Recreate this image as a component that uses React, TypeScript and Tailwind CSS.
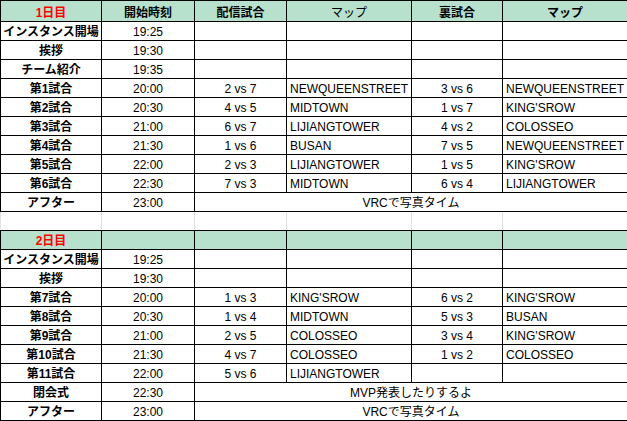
import React from "react";

type Row = {
  label: string;
  time: string;
  match?: string;
  map?: string;
  sub?: string;
  subMap?: string;
  merged?: string;
  blank?: "all" | "sub";
};

const day1: Row[] = [
  { label: "インスタンス開場", time: "19:25", blank: "all" },
  { label: "挨拶", time: "19:30", blank: "all" },
  { label: "チーム紹介", time: "19:35", blank: "all" },
  { label: "第1試合", time: "20:00", match: "2 vs 7", map: "NEWQUEENSTREET", sub: "3 vs 6", subMap: "NEWQUEENSTREET" },
  { label: "第2試合", time: "20:30", match: "4 vs 5", map: "MIDTOWN", sub: "1 vs 7", subMap: "KING'SROW" },
  { label: "第3試合", time: "21:00", match: "6 vs 7", map: "LIJIANGTOWER", sub: "4 vs 2", subMap: "COLOSSEO" },
  { label: "第4試合", time: "21:30", match: "1 vs 6", map: "BUSAN", sub: "7 vs 5", subMap: "NEWQUEENSTREET" },
  { label: "第5試合", time: "22:00", match: "2 vs 3", map: "LIJIANGTOWER", sub: "1 vs 5", subMap: "KING'SROW" },
  { label: "第6試合", time: "22:30", match: "7 vs 3", map: "MIDTOWN", sub: "6 vs 4", subMap: "LIJIANGTOWER" },
  { label: "アフター", time: "23:00", merged: "VRCで写真タイム" },
];

const day2: Row[] = [
  { label: "インスタンス開場", time: "19:25", blank: "all" },
  { label: "挨拶", time: "19:30", blank: "all" },
  { label: "第7試合", time: "20:00", match: "1 vs 3", map: "KING'SROW", sub: "6 vs 2", subMap: "KING'SROW" },
  { label: "第8試合", time: "20:30", match: "1 vs 4", map: "MIDTOWN", sub: "5 vs 3", subMap: "BUSAN" },
  { label: "第9試合", time: "21:00", match: "2 vs 5", map: "COLOSSEO", sub: "3 vs 4", subMap: "KING'SROW" },
  { label: "第10試合", time: "21:30", match: "4 vs 7", map: "COLOSSEO", sub: "1 vs 2", subMap: "COLOSSEO" },
  { label: "第11試合", time: "22:00", match: "5 vs 6", map: "LIJIANGTOWER", blank: "sub" },
  { label: "閉会式", time: "22:30", merged: "MVP発表したりするよ" },
  { label: "アフター", time: "23:00", merged: "VRCで写真タイム" },
];

const cell = "border border-black h-[19px] p-0 align-bottom leading-[15px] whitespace-nowrap overflow-hidden";

const DataRow: React.FC<{ row: Row }> = ({ row }) => (
  <tr>
    <td className={`${cell} text-center font-bold`}>{row.label}</td>
    <td className={`${cell} text-center`}>{row.time}</td>
    {row.merged ? (
      <td colSpan={4} className={`${cell} text-center`}>{row.merged}</td>
    ) : row.blank === "all" ? (
      <>
        <td className={cell}></td>
        <td className={cell}></td>
        <td className={cell}></td>
        <td className={cell}></td>
      </>
    ) : (
      <>
        <td className={`${cell} text-center`}>{row.match}</td>
        <td className={`${cell} pl-[3px]`}>{row.map}</td>
        <td className={`${cell} text-center`}>{row.sub}</td>
        <td className={`${cell} pl-[3px]`}>{row.subMap}</td>
      </>
    )}
  </tr>
);

const HeaderRow: React.FC<{ day: string; titles: boolean }> = ({ day, titles }) => (
  <tr className={titles ? "bg-[#b7e1cd] h-[21px]" : "bg-[#b7e1cd] h-[19px]"}>
    <td className={`${cell} text-center font-bold text-[#ff0000]`}>{day}</td>
    <td className={`${cell} text-center font-bold`}>{titles ? "開始時刻" : ""}</td>
    <td className={`${cell} text-center font-bold`}>{titles ? "配信試合" : ""}</td>
    <td className={`${cell} text-center`}>{titles ? "マップ" : ""}</td>
    <td className={`${cell} text-center font-bold`}>{titles ? "裏試合" : ""}</td>
    <td className={`${cell} text-center font-bold`}>{titles ? "マップ" : ""}</td>
  </tr>
);

const gap = "h-[19px] p-0 border-x border-x-[#e2e2e2] border-y border-y-black";

export default function App() {
  return (
    <div className="w-[627px] h-[421px] bg-white overflow-hidden text-[12px] text-black font-['Liberation_Sans','Noto_Sans_CJK_JP',sans-serif]">
      <table className="border-collapse table-fixed w-[627px]">
        <colgroup>
          <col className="w-[101px]" />
          <col className="w-[93px]" />
          <col className="w-[92px]" />
          <col className="w-[125px]" />
          <col className="w-[91px]" />
          <col className="w-[125px]" />
        </colgroup>
        <tbody>
          <HeaderRow day="1日目" titles />
          {day1.map((r, i) => (
            <DataRow key={"a" + i} row={r} />
          ))}
          <tr>
            <td className={gap}></td>
            <td className={gap}></td>
            <td className={gap}></td>
            <td className={gap}></td>
            <td className={gap}></td>
            <td className={gap}></td>
          </tr>
          <HeaderRow day="2日目" titles={false} />
          {day2.map((r, i) => (
            <DataRow key={"b" + i} row={r} />
          ))}
        </tbody>
      </table>
    </div>
  );
}
